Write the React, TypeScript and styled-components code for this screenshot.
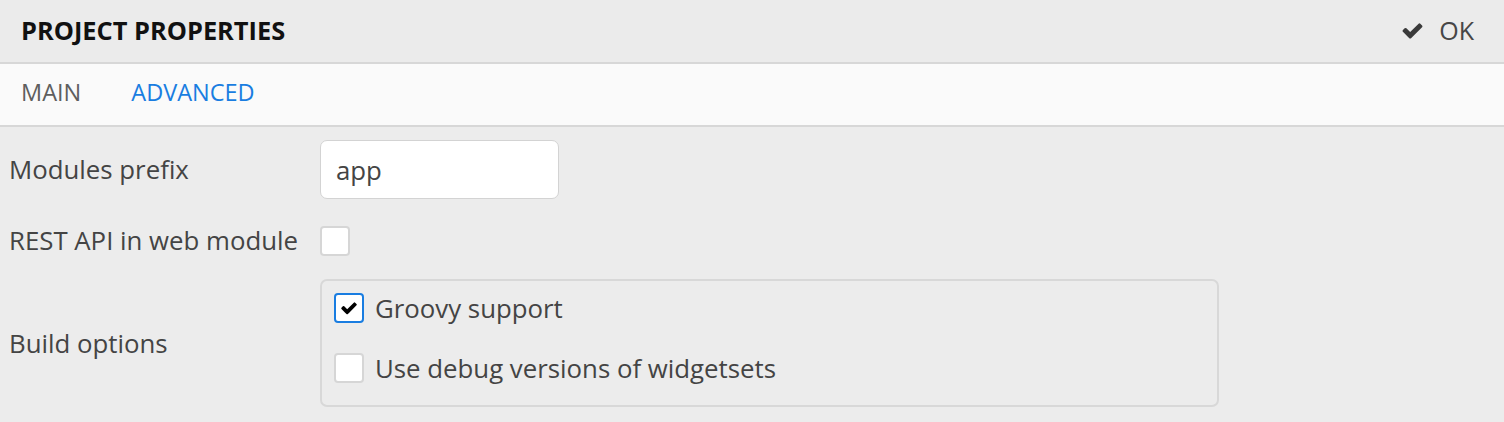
import React from "react";
import styled, { createGlobalStyle } from "styled-components";

const Global = createGlobalStyle`
  html, body { margin: 0; padding: 0; }
  body {
    background: #ececec;
    font-family: "Open Sans", "DejaVu Sans", sans-serif;
    color: #464646;
  }
`;

const Page = styled.div`
  width: 1504px;
  height: 422px;
  display: flex;
  flex-direction: column;
  background: #ececec;
  overflow: hidden;
`;

const Header = styled.div`
  height: 64px;
  box-sizing: border-box;
  display: flex;
  align-items: center;
  justify-content: space-between;
  padding: 0 30px 2px 21px;
  background: #ebebeb;
  border-bottom: 2px solid #d7d7d7;
`;

const Title = styled.div`
  font-size: 25.4px;
  font-weight: 700;
  color: #111;
`;

const OkButton = styled.button`
  display: flex;
  align-items: center;
  gap: 15px;
  border: none;
  background: transparent;
  padding: 0;
  font-family: inherit;
  font-size: 25px;
  color: #464646;
  cursor: pointer;
`;

const TabBar = styled.div`
  height: 63px;
  box-sizing: border-box;
  display: flex;
  align-items: center;
  gap: 50px;
  padding: 0 21px 5px;
  background: #fafafa;
  border-bottom: 2px solid #d7d7d7;
`;

const Tab = styled.div<{ $active?: boolean }>`
  font-size: 23.5px;
  color: ${(p) => (p.$active ? "#197de1" : "#5e5e5e")};
`;

const Form = styled.div`
  display: grid;
  grid-template-columns: 311px 1fr;
  padding: 13px 0 0 9px;
  align-items: center;
`;

const LabelCell = styled.div<{ $pb: number }>`
  font-size: 25.8px;
  line-height: 35px;
  color: #444;
  white-space: nowrap;
  padding-bottom: ${(p) => p.$pb}px;
`;

const Cell = styled.div<{ $pb: number }>`
  padding-bottom: ${(p) => p.$pb}px;
  display: flex;
`;

const TextInput = styled.div`
  width: 239px;
  height: 59px;
  box-sizing: border-box;
  background: #fff;
  border: 1.5px solid #d3d3d3;
  border-radius: 7px;
  display: flex;
  align-items: center;
  padding-left: 15px;
  font-size: 25.8px;
  color: #444;
`;

const Box = styled.div<{ $checked?: boolean }>`
  width: 30px;
  height: 30px;
  box-sizing: border-box;
  background: #fff;
  border: 2px solid ${(p) => (p.$checked ? "#197de1" : "#d6d6d6")};
  border-radius: 4px;
  display: flex;
  align-items: center;
  justify-content: center;
  flex: none;
`;

const Group = styled.div`
  width: 899px;
  height: 128px;
  box-sizing: border-box;
  border: 2px solid #d8d8d8;
  border-radius: 7px;
  padding: 12px 0 0 12px;
  display: flex;
  flex-direction: column;
  gap: 30px;
`;

const Option = styled.div`
  display: flex;
  align-items: center;
  gap: 11px;
  height: 30px;
  font-size: 25.8px;
  color: #444;
`;

const Check = ({ size = 20, color = "#000" }: { size?: number; color?: string }) => (
  <svg width={size} height={size} viewBox="0 0 1792 1792">
    <path
      fill={color}
      d="M1671 566q0 40-28 68l-724 724-136 136q-28 28-68 28t-68-28l-136-136-362-362q-28-28-28-68t28-68l136-136q28-28 68-28t68 28l294 295 656-657q28-28 68-28t68 28l136 136q28 28 28 68z"
    />
  </svg>
);

export default function App() {
  return (
    <Page>
      <Global />
      <Header>
        <Title>PROJECT PROPERTIES</Title>
        <OkButton>
          <Check size={23} color="#3a3a3a" />
          OK
        </OkButton>
      </Header>
      <TabBar>
        <Tab>MAIN</Tab>
        <Tab $active>ADVANCED</Tab>
      </TabBar>
      <Form>
        <LabelCell $pb={24}>Modules prefix</LabelCell>
        <Cell $pb={24}>
          <TextInput>app</TextInput>
        </Cell>
        <LabelCell $pb={21}>REST API in web module</LabelCell>
        <Cell $pb={21}>
          <Box />
        </Cell>
        <LabelCell $pb={0}>Build options</LabelCell>
        <Cell $pb={0}>
          <Group>
            <Option>
              <Box $checked>
                <Check size={18} />
              </Box>
              Groovy support
            </Option>
            <Option>
              <Box />
              Use debug versions of widgetsets
            </Option>
          </Group>
        </Cell>
      </Form>
    </Page>
  );
}
